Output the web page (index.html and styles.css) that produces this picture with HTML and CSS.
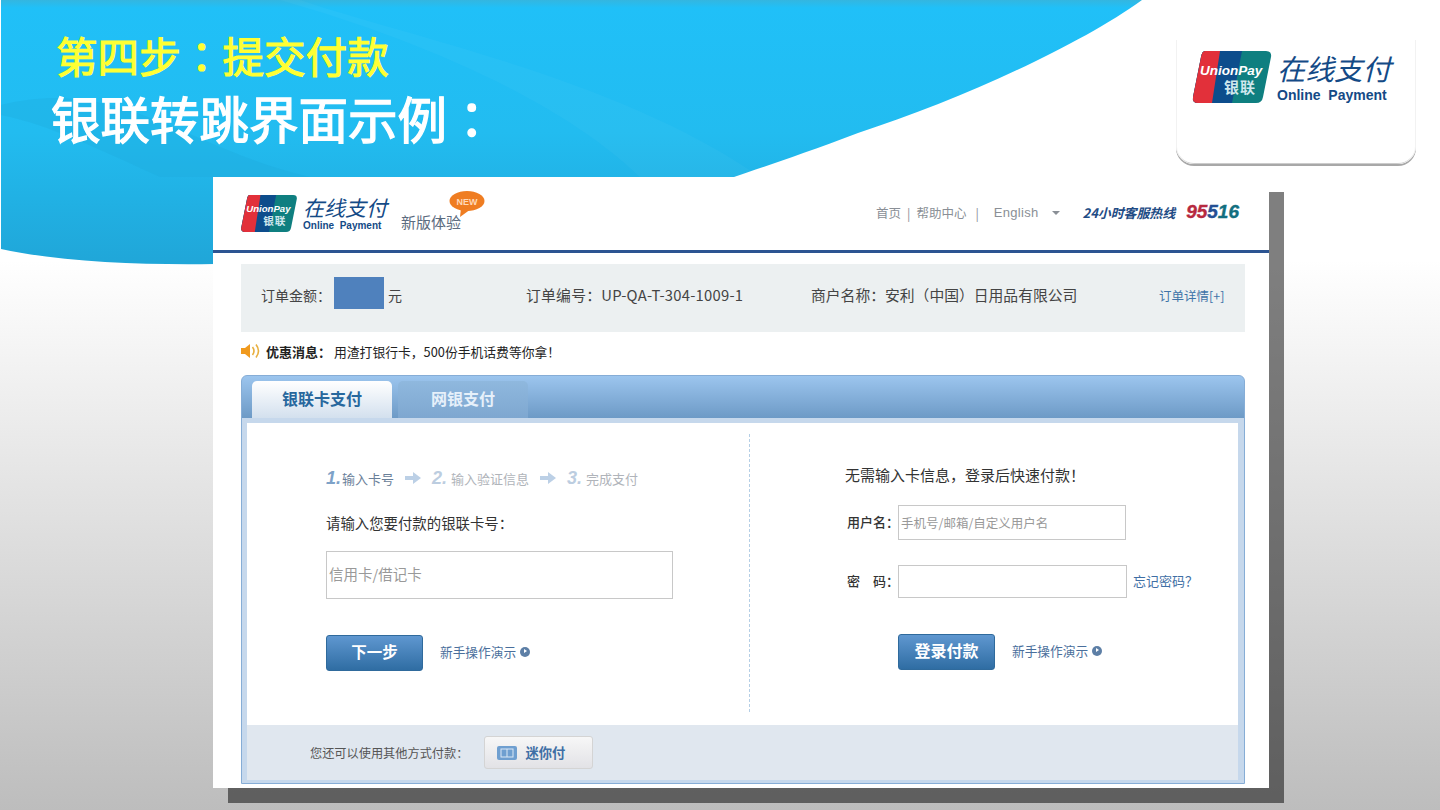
FILE: index.html
```html
<!DOCTYPE html>
<html lang="zh-CN">
<head>
<meta charset="utf-8">
<title>第四步：提交付款</title>
<link rel="stylesheet" href="styles.css">
</head>
<body>
<div class="slide">
  <svg class="swoosh" width="1440" height="270" viewBox="0 0 1440 270">
    <defs>
      <linearGradient id="blue" x1="0" y1="0" x2="0" y2="1">
        <stop offset="0" stop-color="#34b6e0"/>
        <stop offset="0.03" stop-color="#20c0f8"/>
        <stop offset="0.5" stop-color="#22bcf0"/>
        <stop offset="1" stop-color="#20a6d8"/>
      </linearGradient>
    </defs>
    <path d="M1 0H1142C1080 45 960 100 858 133C800 155 760 168 734 177C600 225 400 250 214 264C140 265 60 262 1 249Z" fill="url(#blue)"/>
    <path d="M1 105C120 75 190 150 310 177H160C100 150 50 125 1 115Z" fill="#1fa9dc" opacity=".3"/>
    <path d="M300 0C420 40 620 80 760 177H640C560 100 420 40 280 0Z" fill="#fff" opacity=".03"/>
  </svg>

  <header class="titles">
    <h1 class="title-step">第四步<span class="colon" lang="zh-TW">：</span>提交付款</h1>
    <h2 class="title-main">银联转跳界面示例<span class="colon" lang="zh-TW">：</span></h2>
  </header>

  <aside class="logo-card">
    <div class="logo logo-large">
      <svg class="logo-mark" viewBox="0 0 80 52">
        <clipPath id="cardA"><path d="M13 0H74Q80 0 79 6L71 46Q70 52 64 52H6Q0 52 1 46L9 6Q10 0 13 0Z"/></clipPath>
        <g clip-path="url(#cardA)">
          <rect width="80" height="52" fill="#0f7f80"/>
          <path d="M0 0H50L40 52H0Z" fill="#0d4d8c"/>
          <path d="M0 0H28L20 52H0Z" fill="#e2303a"/>
        </g>
        <text x="8" y="24" class="mark-en">UnionPay</text>
        <text x="32" y="42" class="mark-cn">银联</text>
      </svg>
      <div class="logo-words">
        <div class="logo-cn">在线支付</div>
        <div class="logo-en">Online&nbsp; Payment</div>
      </div>
    </div>
  </aside>

  <main class="shot">
    <div class="topbar">
      <div class="logo logo-small">
        <svg class="logo-mark" viewBox="0 0 80 52">
          <clipPath id="cardB"><path d="M13 0H74Q80 0 79 6L71 46Q70 52 64 52H6Q0 52 1 46L9 6Q10 0 13 0Z"/></clipPath>
          <g clip-path="url(#cardB)">
            <rect width="80" height="52" fill="#0f7f80"/>
            <path d="M0 0H50L40 52H0Z" fill="#0d4d8c"/>
            <path d="M0 0H28L20 52H0Z" fill="#e2303a"/>
          </g>
          <text x="8" y="24" class="mark-en">UnionPay</text>
          <text x="32" y="42" class="mark-cn">银联</text>
        </svg>
        <div class="logo-words">
          <div class="logo-cn">在线支付</div>
          <div class="logo-en">Online&nbsp; Payment</div>
        </div>
      </div>
      <div class="newver">
        <span class="newver-label">新版体验</span>
        <svg class="new-badge" width="36" height="26" viewBox="0 0 36 26">
          <ellipse cx="18" cy="10" rx="17.5" ry="10" fill="#ef7d22"/>
          <path d="M12 17L11 26L22 18Z" fill="#ef7d22"/>
          <text x="18" y="14" class="new-text">NEW</text>
        </svg>
      </div>
      <nav class="topnav">
        <span>首页</span><span class="bar">|</span><span>帮助中心</span><span class="bar bar-wide">|</span>
        <span class="lang">English</span><span class="caret"></span>
        <span class="hotline">24小时客服热线</span>
        <span class="phone"><span class="ph-red">95</span><span class="ph-blue">5</span><span class="ph-teal">16</span></span>
      </nav>
    </div>

    <div class="content">
      <section class="order">
        <div class="order-amount"><span class="amount-label">订单金额：</span><span class="mask"></span><span class="yuan">元</span></div>
        <div class="order-no">订单编号：UP-QA-T-304-1009-1</div>
        <div class="order-shop">商户名称：安利（中国）日用品有限公司</div>
        <a class="order-more">订单详情[+]</a>
      </section>

      <section class="promo">
        <svg class="speaker" width="20" height="16" viewBox="0 0 20 16">
          <path d="M0 5H4L9 1V15L4 11H0Z" fill="#f09a1e"/>
          <path d="M11.5 4Q14.5 8 11.5 12M15 1.5Q20 8 15 14.5" fill="none" stroke="#e8b040" stroke-width="1.6"/>
        </svg>
        <b>优惠消息：</b><span class="promo-text">用渣打银行卡，500份手机话费等你拿！</span>
      </section>

      <section class="panel">
        <div class="tabs">
          <div class="tab tab-on">银联卡支付</div>
          <div class="tab tab-off">网银支付</div>
        </div>
        <div class="panel-inner">
          <div class="panel-body">
            <div class="col col-left">
              <div class="steps">
                <i class="num num-on">1.</i><span class="step-on">输入卡号</span>
                <svg class="arrow" width="16" height="12" viewBox="0 0 16 12"><path d="M0 4H8V0L16 6L8 12V8H0Z"/></svg>
                <i class="num">2.</i><span>输入验证信息</span>
                <svg class="arrow" width="16" height="12" viewBox="0 0 16 12"><path d="M0 4H8V0L16 6L8 12V8H0Z"/></svg>
                <i class="num">3.</i><span>完成支付</span>
              </div>
              <div class="card-label">请输入您要付款的银联卡号：</div>
              <div class="input input-card"><span class="input-text">信用卡/借记卡</span></div>
              <div class="actions">
                <div class="btn btn-next"><span class="btn-text">下一步</span></div>
                <a class="demo">新手操作演示<span class="play"></span></a>
              </div>
            </div>
            <div class="col col-right">
              <div class="quick">无需输入卡信息，登录后快速付款！</div>
              <div class="field field-user">
                <label>用户名：</label>
                <div class="input input-user">手机号/邮箱/自定义用户名</div>
              </div>
              <div class="field field-pass">
                <label>密&emsp;码：</label>
                <div class="input input-pass"></div>
                <a class="forgot">忘记密码？</a>
              </div>
              <div class="actions actions-login">
                <div class="btn btn-login"><span class="btn-text">登录付款</span></div>
                <a class="demo">新手操作演示<span class="play"></span></a>
              </div>
            </div>
          </div>
          <div class="panel-foot">
            <span class="foot-text">您还可以使用其他方式付款：</span>
            <div class="mini">
              <svg class="mini-icon" width="20" height="14" viewBox="0 0 20 14">
                <rect width="20" height="14" rx="2" fill="#6f9fd0"/>
                <rect x="4" y="3" width="12" height="8" fill="none" stroke="#dbe8f5" stroke-width="1"/>
                <path d="M10 3V11" stroke="#dbe8f5"/>
              </svg>
              <span>迷你付</span>
            </div>
          </div>
        </div>
      </section>
    </div>
  </main>
</div>
</body>
</html>
```

FILE: styles.css
```css
* { box-sizing: border-box; }
html, body { margin: 0; padding: 0; }
body {
  width: 1440px;
  height: 810px;
  overflow: hidden;
  font-family: "Liberation Sans", "Noto Sans CJK SC", sans-serif;
}
.slide {
  position: relative;
  width: 1440px;
  height: 810px;
  overflow: hidden;
  background: linear-gradient(180deg, #fff 0, #fff 260px, #bdbdbd 810px);
}
.swoosh { position: absolute; left: 0; top: 0; }

.titles { position: absolute; left: 51px; top: 28px; font-family: "Noto Sans CJK SC", sans-serif; }
.title-step {
  margin: 0 0 0 5px;
  font-size: 41.6px;
  line-height: 54px;
  font-weight: 400;
  -webkit-text-stroke: 1.1px #ffff33;
  color: #ffff33;
}
.title-main {
  margin: 4px 0 0;
  font-size: 49.5px;
  line-height: 64px;
  font-weight: 400;
  -webkit-text-stroke: 1.3px #fff;
  color: #fff;
}
.colon { font-family: "Noto Sans CJK TC", sans-serif; }

.logo-card {
  position: absolute;
  left: 1176px;
  top: 40px;
  width: 240px;
  height: 124px;
  background: #fff;
  border-radius: 0 0 18px 18px;
  box-shadow: 0 2px 0 #a8a8a8, inset 1px 0 0 #f2f2f2, inset -1px 0 0 #f2f2f2, inset 0 -1px 0 #ccc;
  padding: 11px 0 0 16px;
}

.logo { display: flex; }
.logo-mark { display: block; flex: none; }
.mark-en { font: italic 700 13.5px "Liberation Sans", sans-serif; fill: #fff; }
.mark-cn { font: 700 15px "Noto Sans CJK SC", sans-serif; fill: #cfe8ee; letter-spacing: 1px; }
.logo-words { color: #144a86; }
.logo-cn { font-family: "Noto Sans CJK SC", sans-serif; font-style: italic; white-space: nowrap; }
.logo-en { font-family: "Liberation Sans", sans-serif; font-weight: 700; white-space: nowrap; }

.logo-large .logo-mark { width: 80px; height: 52px; }
.logo-large .logo-words { margin-left: 5px; }
.logo-large .logo-cn { font-size: 28.5px; line-height: 34px; }
.logo-large .logo-en { font-size: 14px; line-height: 16px; margin-top: 2px; }

.logo-small .logo-mark { width: 58px; height: 37px; }
.logo-small .logo-words { margin-left: 5px; }
.logo-small .logo-cn { font-size: 21px; line-height: 24px; }
.logo-small .logo-en { font-size: 10px; line-height: 12px; margin-top: 1px; }

.shot {
  position: absolute;
  left: 213px;
  top: 177px;
  width: 1056px;
  height: 611px;
  background: #fff;
  box-shadow: 15px 15px 0 rgba(0, 0, 0, .5);
  font-family: "Noto Sans CJK SC", sans-serif;
}

.topbar {
  position: relative;
  display: flex;
  align-items: flex-start;
  height: 76px;
  padding: 18px 30px 0 27px;
  border-bottom: 3px solid #2c5492;
}
.newver { position: relative; margin-left: 14px; width: 62px; }
.newver-label { position: absolute; left: 0; top: 17px; font-size: 15px; line-height: 20px; color: #5c6c80; white-space: nowrap; }
.new-badge { position: absolute; left: 48px; top: -4px; }
.new-text { font: 700 9px "Liberation Sans", sans-serif; fill: #ffd9b8; text-anchor: middle; }

.topnav {
  margin-left: auto;
  display: flex;
  align-items: center;
  height: 34px;
  font-size: 12.5px;
  color: #8a8f96;
  white-space: nowrap;
}
.bar { margin: 0 6px; }
.bar-wide { margin: 0 15px 0 9px; }
.lang { font-family: "Liberation Sans", sans-serif; font-size: 13px; letter-spacing: .3px; }
.caret {
  width: 0; height: 0; margin: 2px 23px 0 13px;
  border: 4px solid transparent; border-top: 4px solid #8a8f96; border-bottom: 0;
}
.hotline { font-style: italic; font-weight: 700; font-size: 13px; color: #1f4c85; letter-spacing: -.1px; }
.phone { margin-left: 11px; font: italic 700 19px "Liberation Sans", sans-serif; -webkit-text-stroke: .4px; }
.ph-red { color: #b7293f; }
.ph-blue { color: #244f94; }
.ph-teal { color: #136f80; }

.content { padding: 11px 24px 0 28px; }

.order {
  display: flex;
  align-items: center;
  height: 68px;
  padding-left: 20px;
  background: #ecf0f1;
  color: #444;
  font-size: 14.8px;
  white-space: nowrap;
}
.order-amount { display: flex; align-items: center; width: 265px; font-size: 14px; margin-top: -6px; }
.mask { width: 50px; height: 32px; margin: -4px 4px 0 3px; background: #4f81bd; }
.order-no { width: 285px; letter-spacing: .25px; margin-top: -8px; }
.order-shop { width: 348px; margin-top: -8px; }
.order-more { font-size: 12.5px; color: #3f74a8; margin-top: -6px; }

.promo {
  display: flex;
  align-items: center;
  height: 43px;
  padding-bottom: 5px;
  font-size: 13px;
  color: #222;
  white-space: nowrap;
}
.speaker { margin-right: 5px; }
.promo-text { margin-left: 3px; font-size: 12.8px; }

.panel {
  height: 409px;
  border: 1px solid #86add6;
  border-radius: 6px 6px 0 0;
  background: linear-gradient(180deg, #9cc5ee 0, #6d9ac6 42px, #c6d8ec 42px);
  padding: 0 6px 3px 5px;
}
.tabs { display: flex; height: 42px; padding: 5px 0 0 5px; gap: 6px; }
.tab {
  height: 37px;
  padding-bottom: 4px;
  display: flex; align-items: center; justify-content: center;
  font-size: 16px; font-weight: 700;
  border-radius: 5px 5px 0 0;
}
.tab-on { width: 140px; color: #27679d; background: linear-gradient(180deg, #fff, #d3e0ee); }
.tab-off { width: 130px; color: #e6f0fa; background: linear-gradient(180deg, #8fb8de, #7ea7d0); }

.panel-inner { margin-top: 5px; background: #fff; height: 357px; display: flex; flex-direction: column; }
.panel-body { flex: none; height: 302px; display: flex; position: relative; padding: 11px 0 13px; }

.col { height: 278px; }
.col-left {
  width: 503px;
  padding-left: 79px;
  border-right: 1px dashed #b5cfe6;
}
.col-right { flex: 1; padding-left: 95px; }

.steps {
  display: flex;
  align-items: center;
  height: 20px;
  margin-top: 34px;
  font-size: 13px;
  color: #b0b4ba;
  white-space: nowrap;
}
.num { font: italic 700 18px "Liberation Sans", sans-serif; color: #bccde0; margin-right: 4px; }
.num-on { color: #7ea2c8; margin-right: 1px; }
.step-on { color: #6a8099; }
.arrow { margin: 0 11px; fill: #bcd0e6; }

.card-label { margin-top: 25px; font-size: 14.4px; line-height: 20px; color: #333; }
.input {
  border: 1px solid #c8c8c8;
  background: #fff;
  color: #999;
  white-space: nowrap;
  display: flex;
  align-items: center;
}
.input-card { margin-top: 18px; width: 347px; height: 48px; padding-left: 2px; font-size: 14.5px; }
.input-text { margin-top: -3px; }
.actions { display: flex; align-items: center; margin-top: 36px; }
.btn {
  width: 97px;
  height: 36px;
  display: flex; align-items: center; justify-content: center;
  border: 1px solid #2f6a9c;
  border-radius: 3px;
  background: linear-gradient(180deg, #5f97d0, #2f6da3);
  color: #fff;
  font-weight: 700;
  font-size: 15.5px;
}
.btn-login { font-size: 16px; }
.btn-text { margin-top: -4px; }
.demo { display: flex; align-items: center; margin: -3px 0 0 17px; font-size: 12.7px; color: #4a6f9c; white-space: nowrap; }
.play {
  position: relative;
  width: 10px; height: 10px; margin-left: 4px;
  border-radius: 50%;
  background: #5d7fa6;
}
.play::after {
  content: "";
  position: absolute; left: 4px; top: 2.5px;
  border: 2.5px solid transparent; border-left: 3px solid #fff; border-right: 0;
}

.quick { margin-top: 29px; font-size: 15px; line-height: 24px; color: #333; white-space: nowrap; }
.field { display: flex; align-items: center; font-size: 13px; color: #333; white-space: nowrap; }
.field label { width: 51px; margin: -2px 0 0 2px; font-weight: 500; }
.field-user { margin-top: 18px; }
.field-pass { margin-top: 25px; }
.input-user { width: 228px; height: 35px; padding-left: 2px; font-size: 12.5px; }
.input-pass { width: 229px; height: 33px; }
.forgot { margin: -3px 0 0 6px; color: #3f6fa5; font-size: 13px; }
.actions-login { margin-top: 36px; margin-left: 53px; }

.panel-foot {
  flex: 1;
  display: flex;
  align-items: center;
  padding-left: 63px;
  background: #e0e7ef;
  font-size: 12.2px;
  color: #555;
  white-space: nowrap;
}
.mini {
  display: flex; align-items: center;
  width: 109px; height: 33px; margin-left: 16px; padding-left: 12px;
  border: 1px solid #d4d4d4;
  border-radius: 3px;
  background: linear-gradient(180deg, #f7f7f7, #e2e2e6);
  color: #3f6fa5;
  font-size: 13.3px;
  font-weight: 700;
}
.mini-icon { margin-right: 8px; }
```
